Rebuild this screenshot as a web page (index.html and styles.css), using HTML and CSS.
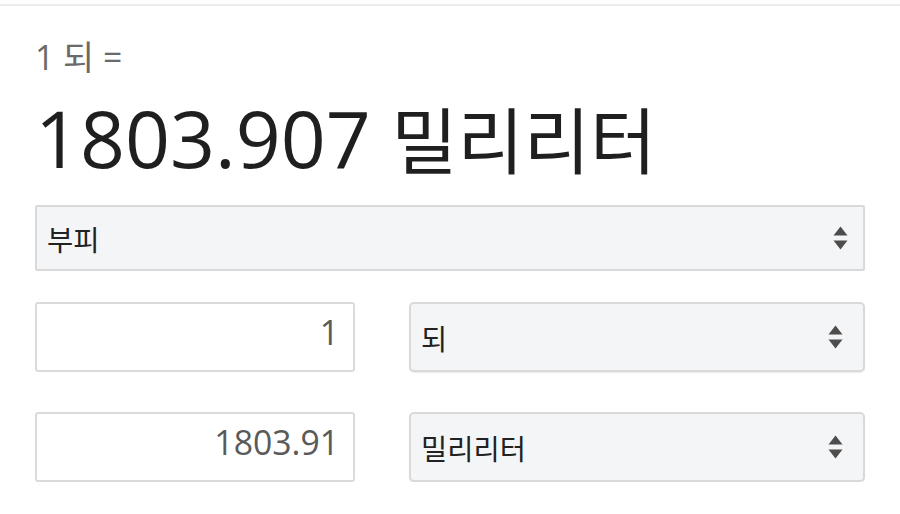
FILE: index.html
```html
<!DOCTYPE html>
<html lang="ko">
<head>
<meta charset="utf-8">
<title>되 → 밀리리터</title>
<link rel="stylesheet" href="styles.css">
</head>
<body>
<div class="topline"></div>
<main class="converter">
  <p class="lead">1 되 =</p>
  <h1 class="result">1803.907 <span class="unit">밀리리터</span></h1>
  <div class="select-wrap select-wide">
    <select class="select select-flat">
      <option>부피</option>
    </select>
    <svg class="arrows" width="15" height="24" viewBox="0 0 15 24" aria-hidden="true">
      <path d="M7.5 0.5 L14.5 9.5 L0.5 9.5 Z" />
      <path d="M0.5 14.5 L14.5 14.5 L7.5 23.5 Z" />
    </svg>
  </div>
  <div class="row">
    <input class="amount" type="text" value="1">
    <div class="select-wrap">
      <select class="select">
        <option>되</option>
      </select>
      <svg class="arrows arrows-inset" width="15" height="24" viewBox="0 0 15 24" aria-hidden="true">
        <path d="M7.5 0.5 L14.5 9.5 L0.5 9.5 Z" />
        <path d="M0.5 14.5 L14.5 14.5 L7.5 23.5 Z" />
      </svg>
    </div>
  </div>
  <div class="row">
    <input class="amount" type="text" value="1803.91">
    <div class="select-wrap">
      <select class="select">
        <option>밀리리터</option>
      </select>
      <svg class="arrows arrows-inset" width="15" height="24" viewBox="0 0 15 24" aria-hidden="true">
        <path d="M7.5 0.5 L14.5 9.5 L0.5 9.5 Z" />
        <path d="M0.5 14.5 L14.5 14.5 L7.5 23.5 Z" />
      </svg>
    </div>
  </div>
</main>
</body>
</html>
```

FILE: styles.css
```css
html, body {
  margin: 0;
  padding: 0;
  background: #ffffff;
}

body {
  font-family: "Open Sans", "Noto Sans CJK KR", sans-serif;
  color: #222222;
}

.topline {
  margin-top: 4px;
  height: 2px;
  background: #ececec;
}

.converter {
  padding: 0 35px;
}

.lead {
  margin: 31px 0 0;
  font-size: 33.75px;
  line-height: 40px;
  color: #6a6a6a;
}

.result {
  margin: 16px 0 0;
  font-size: 78.75px;
  line-height: 90px;
  font-weight: 400;
  color: #1f1f1f;
}

.unit {
  font-size: 72px;
}

.select-wrap {
  position: relative;
}

.select-wide {
  margin-top: 20px;
}

.select {
  display: block;
  width: 100%;
  height: 70px;
  box-sizing: border-box;
  margin: 0;
  padding: 0 50px 0 10px;
  -webkit-appearance: none;
  appearance: none;
  font-family: "Noto Sans CJK KR", "Open Sans", sans-serif;
  font-size: 28.5px;
  color: #222222;
  background: #f4f5f6;
  border: 2px solid #d9d9d9;
  border-radius: 5px;
  box-shadow: 0 1px 1px rgba(0, 0, 0, 0.08);
  outline: none;
}

.select-flat {
  height: 66px;
  border-radius: 2px;
  box-shadow: none;
}

.arrows {
  position: absolute;
  right: 17px;
  top: 50%;
  margin-top: -12px;
  fill: #4d4d4d;
  pointer-events: none;
}

.arrows-inset {
  right: 22px;
}

.row {
  display: grid;
  grid-template-columns: 320fr 456fr;
  column-gap: 54px;
  margin-top: 31px;
}

.row + .row {
  margin-top: 40px;
}

.amount {
  display: block;
  width: 100%;
  height: 70px;
  box-sizing: border-box;
  margin: 0;
  padding: 0 14px 10px;
  font-family: "Open Sans", "Noto Sans CJK KR", sans-serif;
  font-size: 33.75px;
  color: #5a5a5a;
  text-align: right;
  background: #ffffff;
  border: 2px solid #dadada;
  border-radius: 3px;
  outline: none;
}
```
